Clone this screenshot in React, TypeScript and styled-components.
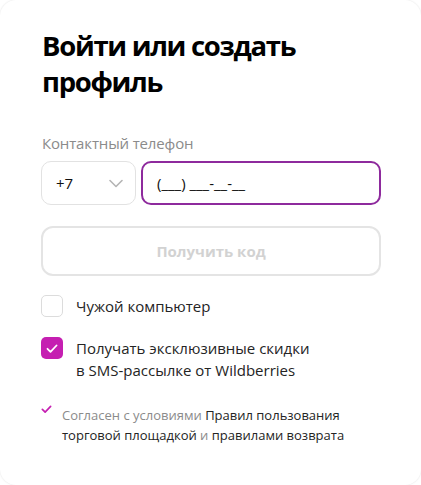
import React from 'react';
import styled, { createGlobalStyle } from 'styled-components';

const PURPLE = '#8e2a9d';
const MAGENTA = '#c51fb1';

const GlobalStyle = createGlobalStyle`
  html, body {
    margin: 0;
    padding: 0;
    background: #fff;
  }
  body {
    font-family: "Open Sans", "Noto Sans", sans-serif;
    color: #242424;
  }
`;

const Card = styled.div`
  box-sizing: border-box;
  width: 421px;
  height: 485px;
  background: #fff;
  border-radius: 16px;
  box-shadow: 0 0 2px rgba(0, 0, 0, 0.12);
  padding: 28px 40px 0 41px;
`;

const Title = styled.h1`
  margin: 0 0 34px 1px;
  font-size: 27.5px;
  line-height: 36px;
  letter-spacing: -1.3px;
  font-weight: 700;
  color: #000;
`;

const Label = styled.div`
  font-size: 15px;
  line-height: 20px;
  letter-spacing: -0.15px;
  color: #8b8b8b;
  margin: -1px 0 8px 1px;
`;

const PhoneRow = styled.div`
  display: flex;
  gap: 5px;
`;

const CodeSelect = styled.div`
  box-sizing: border-box;
  width: 95px;
  height: 44px;
  border: 1px solid #e2e2e2;
  border-radius: 10px;
  display: flex;
  align-items: center;
  justify-content: space-between;
  padding: 0 12px 0 14px;
  font-size: 15px;
  color: #111;
`;

const PhoneInput = styled.div`
  box-sizing: border-box;
  flex: 1;
  height: 44px;
  border: 2px solid ${PURPLE};
  border-radius: 10px;
  display: flex;
  align-items: center;
  padding: 0 14px;
  font-size: 15px;
  color: #111;
`;

const SubmitButton = styled.button`
  box-sizing: border-box;
  width: 100%;
  height: 50px;
  margin-top: 21px;
  border: 2px solid #e4e4e4;
  border-radius: 12px;
  background: #fff;
  font-family: inherit;
  font-size: 15px;
  font-weight: 700;
  color: #d2d2d2;
`;

const Options = styled.div`
  display: flex;
  flex-direction: column;
  gap: 20px;
  margin-top: 19px;
`;

const CheckRow = styled.label`
  display: flex;
  gap: 13px;
  align-items: flex-start;
  font-size: 15px;
  line-height: 22px;
  color: #242424;
`;

const Box = styled.span<{ $checked?: boolean }>`
  box-sizing: border-box;
  flex: none;
  width: 22px;
  height: 22px;
  border-radius: 5px;
  border: ${p => (p.$checked ? 'none' : '1px solid #dcdcdc')};
  background: ${p => (p.$checked ? MAGENTA : '#fff')};
  display: flex;
  align-items: center;
  justify-content: center;
`;

const Agreement = styled.div`
  display: flex;
  gap: 10px;
  margin-top: 24px;
  font-size: 13px;
  line-height: 20px;
`;

const TickSlot = styled.span`
  display: flex;
  padding-top: 0;
  height: 10px;
`;

const Muted = styled.span`
  color: #8b8b8b;
`;

const Dark = styled.span`
  color: #242424;
`;

const Chevron = () => (
  <svg width="14" height="9" viewBox="0 0 14 9" fill="none">
    <path d="M1 1.5l6 6 6-6" stroke="#b5b5b5" strokeWidth="1.6" strokeLinecap="round" strokeLinejoin="round" />
  </svg>
);

const Tick = ({ color, size }: { color: string; size: number }) => (
  <svg width={size} height={size * 0.75} viewBox="0 0 12 9" fill="none">
    <path d="M1.5 4.8l3 3 6-6.3" stroke={color} strokeWidth="1.8" strokeLinecap="round" strokeLinejoin="round" />
  </svg>
);

const App: React.FC = () => (
  <>
    <GlobalStyle />
    <Card>
      <Title>Войти или создать профиль</Title>
      <Label>Контактный телефон</Label>
      <PhoneRow>
        <CodeSelect>
          +7
          <Chevron />
        </CodeSelect>
        <PhoneInput>(___) ___-__-__</PhoneInput>
      </PhoneRow>
      <SubmitButton>Получить код</SubmitButton>
      <Options>
        <CheckRow>
          <Box />
          Чужой компьютер
        </CheckRow>
        <CheckRow>
          <Box $checked>
            <Tick color="#fff" size={12} />
          </Box>
          <span>
            Получать эксклюзивные скидки
            <br />
            в SMS-рассылке от Wildberries
          </span>
        </CheckRow>
      </Options>
      <Agreement>
        <TickSlot>
          <Tick color={MAGENTA} size={11} />
        </TickSlot>
        <div>
          <Muted>Согласен с условиями </Muted>
          <Dark>Правил пользования</Dark>
          <br />
          <Dark>торговой площадкой</Dark>
          <Muted> и </Muted>
          <Dark>правилами возврата</Dark>
        </div>
      </Agreement>
    </Card>
  </>
);

export default App;
